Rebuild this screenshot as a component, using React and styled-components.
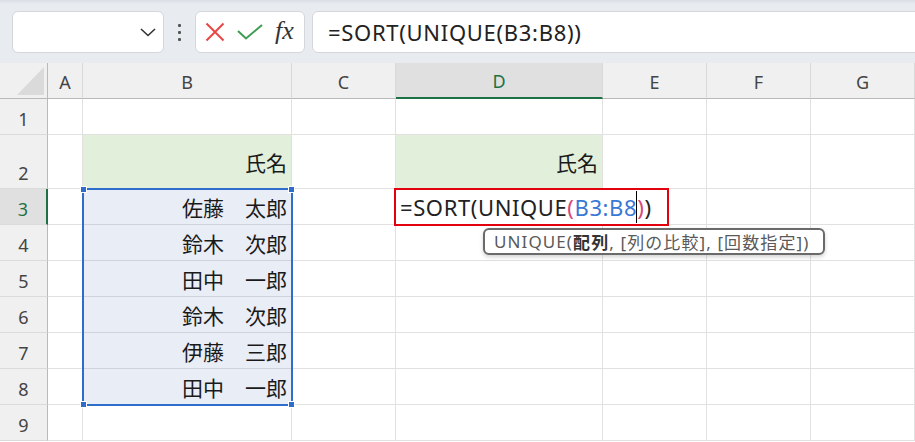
import styled, { createGlobalStyle } from "styled-components";

const GlobalStyle = createGlobalStyle`
  html, body {
    margin: 0;
    padding: 0;
    background: #ffffff;
    overflow: hidden;
  }
  body {
    font-family: "Noto Sans", "Noto Sans CJK JP", sans-serif;
    color: #222;
  }
`;

const Page = styled.div`
  width: 915px;
  height: 442px;
  display: flex;
  flex-direction: column;
  overflow: hidden;
`;

// Name box | dots | cancel/enter/fx | formula
const Toolbar = styled.div`
  height: 63px;
  flex: none;
  box-sizing: border-box;
  padding: 11px 0 0 12px;
  display: flex;
  align-items: flex-start;
  background: linear-gradient(#d9dee4 0, #e8ecf0 4px, #e8ecf0 100%);
  overflow: hidden;
`;

const Box = styled.div`
  height: 42px;
  box-sizing: border-box;
  background: #ffffff;
  border: 1px solid #d3d7dc;
  border-radius: 6px;
  display: flex;
  align-items: center;
  flex: none;
`;

const NameBox = styled(Box)`
  width: 152px;
  justify-content: flex-end;
  padding-right: 5px;
`;

const Dots = styled.div`
  width: 31px;
  height: 42px;
  display: flex;
  flex-direction: column;
  align-items: center;
  justify-content: center;
  gap: 4px;
  flex: none;

  span {
    width: 3px;
    height: 3px;
    background: #555;
    border-radius: 1px;
  }
`;

const FxBox = styled(Box)`
  width: 110px;
  padding-left: 9px;
  gap: 12px;
`;

const FxText = styled.span`
  font-family: "Liberation Serif", "DejaVu Serif", serif;
  font-style: italic;
  font-size: 26px;
  color: #333;
  line-height: 1;
  margin-top: -2px;
`;

const FormulaBox = styled(Box)`
  width: 640px;
  margin-left: 7px;
  padding-left: 15px;
  font-size: 22px;
  letter-spacing: 0.7px;
  color: #222;
`;

// Sheet grid
const Sheet = styled.div`
  flex: 1;
  display: grid;
  grid-template-columns: 48px 35px 209px 104px 207px 104px 104px 1fr;
  grid-template-rows: 36px 36px 54px repeat(7, 36px);
`;

const Cell = styled.div`
  grid-row: ${(p) => p.$row + 1};
  grid-column: ${(p) => p.$col + 1};
  box-sizing: border-box;
  border-right: 1px solid #e1e1e1;
  border-bottom: 1px solid ${(p) => p.$line || "#e1e1e1"};
  background: ${(p) => p.$fill || "#ffffff"};
  display: flex;
  align-items: center;
  justify-content: flex-end;
  padding-right: 4px;
  font-size: 21px;
  color: #1a1a1a;
  position: ${(p) => (p.$raise ? "relative" : "static")};
  z-index: ${(p) => (p.$raise ? 5 : "auto")};
`;

const ColHead = styled.div`
  grid-row: 1;
  grid-column: ${(p) => p.$col + 1};
  box-sizing: border-box;
  background: ${(p) => (p.$active ? "#e0e0e0" : "#f0f0f0")};
  border-right: 1px solid #d9d9d9;
  border-bottom: ${(p) => (p.$active ? "2px solid #1e7145" : "1px solid #b9b9b9")};
  display: flex;
  align-items: center;
  justify-content: center;
  padding-top: 2px;
  font-size: 18px;
  color: ${(p) => (p.$active ? "#1e7145" : "#444")};
`;

const RowHead = styled.div`
  grid-row: ${(p) => p.$row + 1};
  grid-column: 1;
  box-sizing: border-box;
  background: ${(p) => (p.$active ? "#e0e0e0" : "#f0f0f0")};
  border-right: ${(p) => (p.$active ? "2px solid #1e7145" : "1px solid #b9b9b9")};
  border-bottom: 1px solid #dadada;
  display: flex;
  align-items: flex-end;
  justify-content: center;
  padding-bottom: 6px;
  font-size: 18px;
  line-height: 1;
  color: ${(p) => (p.$active ? "#1e7145" : "#444")};
`;

const Corner = styled.div`
  grid-row: 1;
  grid-column: 1;
  box-sizing: border-box;
  background: #f0f0f0;
  border-right: 1px solid #b9b9b9;
  border-bottom: 1px solid #b9b9b9;
  display: flex;
  align-items: flex-end;
  justify-content: flex-end;
  padding: 0 3px 3px 0;
`;

const Selection = styled.div`
  grid-row: 4 / 10;
  grid-column: 3;
  margin: -1px;
  border: 2px solid #2f6dcc;
  position: relative;
  z-index: 4;
  pointer-events: none;
`;

const Handle = styled.div`
  position: absolute;
  width: 7px;
  height: 7px;
  box-sizing: border-box;
  background: #2f6dcc;
  border: 1px solid #ffffff;
  ${(p) => (p.$top ? "top: -4px;" : "bottom: -4px;")}
  ${(p) => (p.$left ? "left: -4px;" : "right: -4px;")}
`;

const EditBox = styled.div`
  position: absolute;
  left: -2px;
  top: -1px;
  width: 275px;
  height: 38px;
  box-sizing: border-box;
  border: 2px solid #e3000f;
  background: #ffffff;
  display: flex;
  align-items: center;
  padding-left: 4px;
  font-size: 22px;
  letter-spacing: 0.6px;
  color: #222;
  white-space: nowrap;
`;

const Paren = styled.span`
  color: #d9467a;
`;

const Ref = styled.span`
  color: #3a78d6;
`;

const Caret = styled.span`
  display: inline-block;
  width: 1px;
  height: 32px;
  background: #000;
  margin: 0 0 0 -1px;
  vertical-align: middle;
`;

const Tip = styled.div`
  position: absolute;
  left: 87px;
  top: 39px;
  width: 342px;
  height: 27px;
  box-sizing: border-box;
  border: 2px solid #6a6a6a;
  border-radius: 6px;
  background: #ffffff;
  box-shadow: 0 2px 4px rgba(0, 0, 0, 0.18);
  display: flex;
  align-items: center;
  padding-left: 9px;
  font-size: 17px;
  letter-spacing: 1.1px;
  color: #5a5a5a;
  white-space: nowrap;

  b {
    color: #333;
    font-weight: 700;
  }
`;

const cols = ["A", "B", "C", "D", "E", "F", "G"];
const names = ["佐藤　太郎", "鈴木　次郎", "田中　一郎", "鈴木　次郎", "伊藤　三郎", "田中　一郎"];

const GREEN = "#e2efda";
const BLUE = "#e8edf6";

// col: 1 = A ... 7 = G
const renderCell = (row, col) => {
  const key = `${row}-${col}`;
  if (row === 2 && (col === 2 || col === 4)) {
    return (
      <Cell key={key} $row={row} $col={col} $fill={GREEN} $line={GREEN}>
        氏名
      </Cell>
    );
  }
  if (col === 2 && row >= 3 && row <= 8) {
    return (
      <Cell key={key} $row={row} $col={col} $fill={BLUE} $line="#cfd4dc">
        {names[row - 3]}
      </Cell>
    );
  }
  if (row === 3 && col === 4) {
    return (
      <Cell key={key} $row={row} $col={col} $raise>
        <EditBox>
          =SORT(UNIQUE<Paren>(</Paren>
          <Ref>B3:B8</Ref>
          <Caret />
          <Paren>)</Paren>)
        </EditBox>
        <Tip>
          UNIQUE(<b>配列</b>, [列の比較], [回数指定])
        </Tip>
      </Cell>
    );
  }
  return <Cell key={key} $row={row} $col={col} />;
};

const App = () => {
  const rows = [1, 2, 3, 4, 5, 6, 7, 8, 9];
  return (
    <Page>
      <GlobalStyle />
      <Toolbar>
        <NameBox>
          <svg width="20" height="12" viewBox="0 0 20 12">
            <path d="M3 3 L10 9.5 L17 3" fill="none" stroke="#333" strokeWidth="1.6" />
          </svg>
        </NameBox>
        <Dots>
          <span />
          <span />
          <span />
        </Dots>
        <FxBox>
          <svg width="20" height="20" viewBox="0 0 20 20">
            <path d="M1.5 1.5 L18.5 18.5 M18.5 1.5 L1.5 18.5" stroke="#e84545" strokeWidth="2" />
          </svg>
          <svg width="26" height="16" viewBox="0 0 26 16">
            <path d="M1 7 L9 14.5 L25 1" fill="none" stroke="#3f9d52" strokeWidth="2" />
          </svg>
          <FxText>fx</FxText>
        </FxBox>
        <FormulaBox>=SORT(UNIQUE(B3:B8))</FormulaBox>
      </Toolbar>

      <Sheet>
        <Corner>
          <svg width="27" height="28" viewBox="0 0 27 28">
            <polygon points="0,28 27,28 27,0" fill="#dadada" />
          </svg>
        </Corner>
        {cols.map((c, i) => (
          <ColHead key={c} $col={i + 1} $active={c === "D"}>
            {c}
          </ColHead>
        ))}
        {rows.map((r) => (
          <RowHead key={`h${r}`} $row={r} $active={r === 3}>
            {r}
          </RowHead>
        ))}
        {rows.map((r) => cols.map((_, i) => renderCell(r, i + 1)))}
        <Selection>
          <Handle $top $left />
          <Handle $top />
          <Handle $left />
          <Handle />
        </Selection>
      </Sheet>
    </Page>
  );
};

export default App;
